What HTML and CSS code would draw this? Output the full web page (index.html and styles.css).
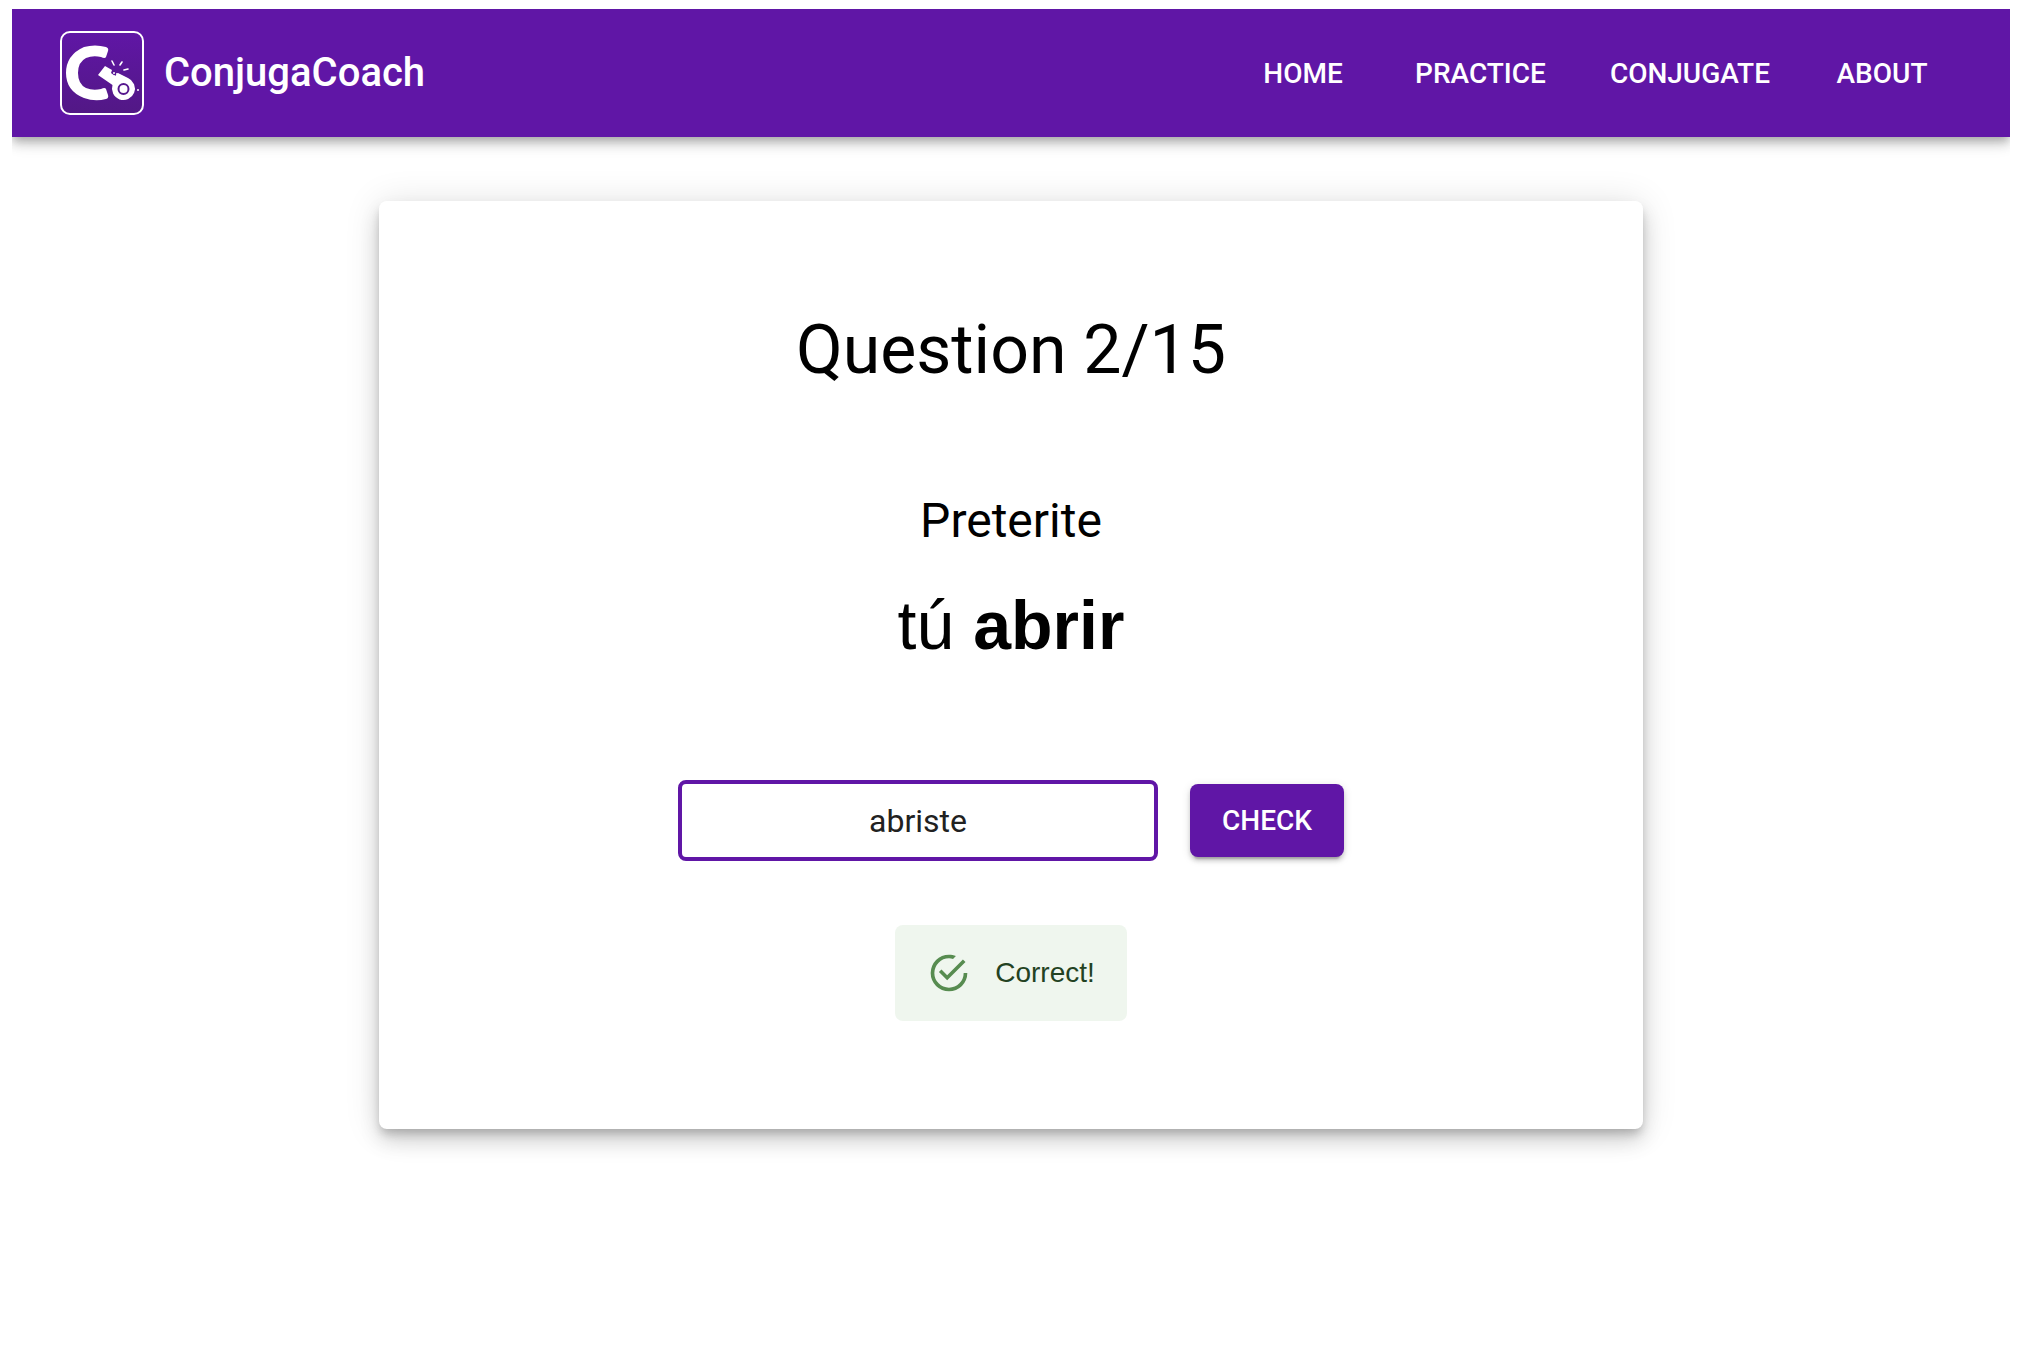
FILE: index.html
```html
<!DOCTYPE html>
<html lang="en">
<head>
<meta charset="utf-8">
<title>ConjugaCoach</title>
<link rel="stylesheet" href="styles.css">
</head>
<body>
<header class="app-bar">
  <a class="brand" href="#">
    <svg class="logo" viewBox="0 0 84 84" aria-hidden="true">
      <defs><linearGradient id="g" x1="0" y1="0" x2="0" y2="1"><stop offset="0" stop-color="#6016a6"/><stop offset="1" stop-color="#521885"/></linearGradient></defs>
      <rect x="1" y="1" width="82" height="82" rx="9" fill="url(#g)" stroke="#fff" stroke-width="2"/>
      <path d="M46 16Q49 17 48 20L46 26Q45 28 41 26Q33 24 26 27Q18 31 18 42Q18 53 26 57Q33 60 41 58Q45 56 46 58L48 64Q49 67 46 68Q35 71 24 67Q6 60 6 42Q6 24 24 16Q35 13 46 16Z" fill="#fff"/>
      <path d="M45 35L52 39L51 42L55 45L58 42L68 47A11.500 11.500 0 1 1 52.500 54L38 44Z" fill="#fff"/>
      <path d="M53 42h2M56 43h2M54 45h1" stroke="#fff" stroke-width="1.500"/>
      <circle cx="63.500" cy="58" r="5" fill="none" stroke="#56188e" stroke-width="2"/>
      <g stroke="#fff" stroke-width="1.600" stroke-linecap="round"><path d="M52 30L54 34M62 31L60 34M64 39L68 38"/></g>
      <circle cx="78" cy="59" r="1" fill="#fff"/>
    </svg>
    <span>ConjugaCoach</span>
  </a>
  <nav class="nav">
    <a href="#">HOME</a>
    <a href="#">PRACTICE</a>
    <a href="#">CONJUGATE</a>
    <a href="#">ABOUT</a>
  </nav>
</header>
<main class="card">
  <h1 class="progress">Question 2/15</h1>
  <h2 class="tense">Preterite</h2>
  <p class="prompt">tú <strong>abrir</strong></p>
  <form class="answer">
    <input class="field" type="text" value="abriste" aria-label="Conjugation">
    <button class="check" type="button">CHECK</button>
  </form>
  <div class="alert" role="status">
    <svg class="tick" viewBox="0 0 24 24" aria-hidden="true"><path fill="#578c50" d="M20,12A8,8 0 0,1 12,20A8,8 0 0,1 4,12A8,8 0 0,1 12,4C12.760,4 13.500,4.110 14.200,4.310L15.770,2.740C14.610,2.260 13.340,2 12,2A10,10 0 0,0 2,12A10,10 0 0,0 12,22A10,10 0 0,0 22,12M7.910,10.080L6.500,11.500L11,16L21,6L19.590,4.580L11,13.170L7.910,10.080Z"/></svg>
    <span>Correct!</span>
  </div>
</main>
</body>
</html>
```
FILE: styles.css
```css
* {
  box-sizing: border-box;
}

body {
  margin: 9px 16px 16px 12px;
  background: #fff;
  color: #000;
  font-family: Roboto, "Liberation Sans", sans-serif;
}

.app-bar {
  display: flex;
  align-items: center;
  justify-content: space-between;
  padding: 22px 64px 22px 48px;
  background: #6016a6;
  box-shadow: 0 4px 8px -2px rgba(0, 0, 0, .2), 0 8px 10px 0 rgba(0, 0, 0, .14), 0 2px 20px 0 rgba(0, 0, 0, .12);
}

.brand {
  display: flex;
  align-items: center;
  gap: 20px;
  color: #fff;
  font-size: 40px;
  font-weight: 500;
  line-height: 48px;
  text-decoration: none;
}

.logo {
  width: 84px;
  height: 84px;
}

.nav {
  display: flex;
  gap: 32px;
}

.nav a {
  min-width: 128px;
  padding: 13px 16px 11px;
  color: #fff;
  font-size: 28px;
  font-weight: 500;
  line-height: 50px;
  text-align: center;
  text-decoration: none;
}

.card {
  display: flex;
  flex-direction: column;
  align-items: center;
  max-width: 1264px;
  margin: 64px auto;
  padding: 107px 64px 108px;
  border-radius: 8px;
  box-shadow: 0 6px 10px -2px rgba(0, 0, 0, .2), 0 12px 20px rgba(0, 0, 0, .14), 0 2px 36px rgba(0, 0, 0, .12);
}

.progress,
.prompt {
  margin: 0;
  font-size: 68px;
  font-weight: 400;
  line-height: 84px;
}

.tense {
  margin: 97px 0 30px;
  font-size: 48px;
  font-weight: 400;
  line-height: 64px;
}

.prompt {
  font-family: "Liberation Sans", sans-serif;
}

.answer {
  display: flex;
  align-items: center;
  gap: 32px;
  margin: 113px 0 64px;
}

.field {
  width: 480px;
  height: 81px;
  border: 4px solid #6016a6;
  border-radius: 8px;
  outline: 0;
  background: #fff;
  color: #212121;
  font-family: inherit;
  font-size: 32px;
  text-align: center;
}

.check {
  padding: 12px 32px;
  border: 0;
  border-radius: 8px;
  background: #6016a6;
  box-shadow: 0 6px 2px -4px rgba(0, 0, 0, .2), 0 4px 4px rgba(0, 0, 0, .14), 0 2px 10px rgba(0, 0, 0, .12);
  color: #fff;
  font-family: inherit;
  font-size: 28px;
  font-weight: 500;
  line-height: 49px;
}

.alert {
  display: flex;
  align-items: center;
  gap: 24px;
  padding: 26px 32px;
  border-radius: 8px;
  background: #eff6ee;
  color: #234222;
  font-family: "Liberation Sans", sans-serif;
  font-size: 28px;
  line-height: 44px;
}

.tick {
  width: 44px;
  height: 44px;
}
```
